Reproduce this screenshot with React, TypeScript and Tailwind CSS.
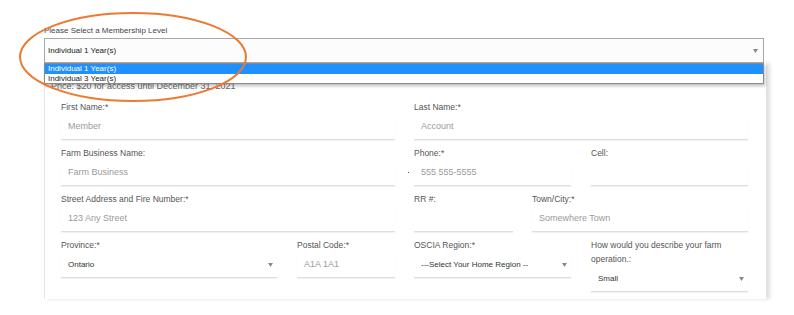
import React from "react";

const FONT = "font-['Liberation_Sans',Arial,sans-serif]";

function Caret() {
  return (
    <svg width="5" height="4" viewBox="0 0 5 4" className="shrink-0">
      <path d="M0 0 L5 0 L2.5 4 Z" fill="#888" />
    </svg>
  );
}

function Field({
  label,
  placeholder,
  width,
  children,
}: {
  label: React.ReactNode;
  placeholder?: string;
  width: string;
  children?: React.ReactNode;
}) {
  return (
    <div className={`${width} flex flex-col`}>
      <div className="min-h-[14px] text-[8.5px] leading-[14px] text-[#555]">{label}</div>
      <div className="relative h-[26px] flex items-center pl-[7px] pr-[4px] border-b border-[#dedede] shadow-[0_1px_1px_rgba(0,0,0,0.05)]">
        {children ?? <span className="text-[9px] text-[#9a9a9a]">{placeholder}</span>}
      </div>
    </div>
  );
}

function SelectField({ label, value, width }: { label: React.ReactNode; value: string; width: string }) {
  return (
    <Field label={label} width={width}>
      <span className="flex-1 text-[8px] text-[#333]">{value}</span>
      <Caret />
    </Field>
  );
}

function App() {
  return (
    <main className={`relative w-[794px] h-[315px] bg-white overflow-hidden ${FONT}`}>
      <div className="pt-[24px] pl-[44px]">
        <div className="h-[14px] text-[8px] leading-[14px] text-[#444]">Please Select a Membership Level</div>
        <div className="relative w-[720px] z-10">
          <div className="h-[25px] flex items-center pl-[3px] pr-[5px] border border-[#a8a8a8] bg-[#fcfcfc]">
            <span className="flex-1 text-[8px] text-[#222]">Individual 1 Year(s)</span>
            <Caret />
          </div>
          <div className="absolute left-0 top-full w-[720px] border border-[#8a8a8a] bg-white shadow-[1px_2px_3px_rgba(0,0,0,0.25)] text-[8px] leading-[9.5px]">
            <div className="bg-[#1e90ff] text-white pl-[3px]">Individual 1 Year(s)</div>
            <div className="text-[#222] pl-[3px]">Individual 3 Year(s)</div>
          </div>
        </div>
        <div className="w-[722px] h-[236px] border-l border-[#e6e6e6] shadow-[4px_0_4px_rgba(0,0,0,0.13)] bg-white">
          <div className="pt-[16px] pl-[6px] text-[9px] leading-[14px] text-[#666]">
            Price: $20 for access until December 31, 2021
          </div>
          <div className="pt-[7px] pl-[16px] flex flex-col gap-[6px]">
            <div className="flex gap-[19px]">
              <Field width="w-[334px]" label="First Name:*" placeholder="Member" />
              <Field width="w-[334px]" label="Last Name:*" placeholder="Account" />
            </div>
            <div className="flex gap-[19px]">
              <Field width="w-[334px]" label="Farm Business Name:" placeholder="Farm Business" />
              <div className="relative flex gap-[20px]">
                <span className="absolute left-[-6px] top-[26px] w-[1px] h-[1px] bg-[#3b4bd8]" />
                <Field width="w-[157px]" label="Phone:*" placeholder="555 555-5555" />
                <Field width="w-[157px]" label="Cell:" />
              </div>
            </div>
            <div className="flex gap-[19px]">
              <Field width="w-[334px]" label="Street Address and Fire Number:*" placeholder="123 Any Street" />
              <div className="flex gap-[19px]">
                <Field width="w-[99px]" label="RR #:" />
                <Field width="w-[216px]" label="Town/City:*" placeholder="Somewhere Town" />
              </div>
            </div>
            <div className="flex gap-[19px] items-start">
              <div className="flex gap-[20px]">
                <SelectField width="w-[216px]" label="Province:*" value="Ontario" />
                <Field width="w-[98px]" label="Postal Code:*" placeholder="A1A 1A1" />
              </div>
              <div className="flex gap-[20px] items-start">
                <SelectField width="w-[157px]" label="OSCIA Region:*" value="---Select Your Home Region --" />
                <SelectField
                  width="w-[157px]"
                  label={<span className="block pr-[10px]">How would you describe your farm operation.:</span>}
                  value="Small"
                />
              </div>
            </div>
          </div>
        </div>
      </div>
      <svg className="absolute left-0 top-0 z-20 pointer-events-none" width="794" height="315">
        <ellipse cx="133" cy="57" rx="113" ry="44" fill="none" stroke="#ec7a30" strokeWidth="2" />
      </svg>
    </main>
  );
}

export default App;
